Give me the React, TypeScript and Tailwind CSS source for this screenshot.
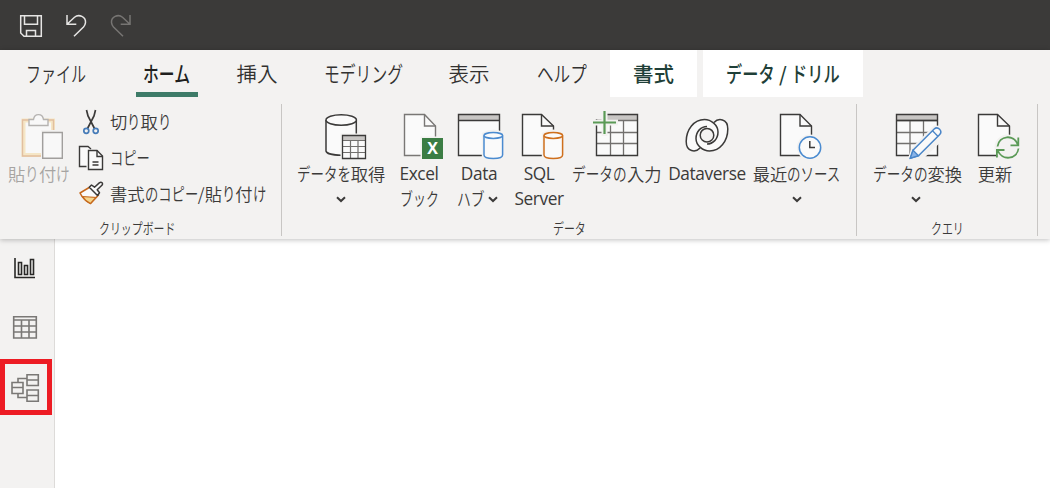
import type { ReactNode } from "react";

const DARK = "#3b3a39";
const PAPER = "#fafafa";

/* Japanese UI text with condensed kana and full-width kanji. */
function Jp({ text, size, kana = 0.77, className = "" }: { text: string; size: number; kana?: number; className?: string }) {
  const runs = text.match(/[\u3040-\u30ff]+|[^\u3040-\u30ff]+/g) ?? [];
  return (
    <span className={`inline-flex whitespace-nowrap ${className}`} style={{ fontSize: size }}>
      {runs.map((run, i) => {
        if (!/[\u3040-\u30ff]/.test(run)) {
          return <span key={i} className="whitespace-pre">{run}</span>;
        }
        return (
          <span key={i} className="inline-block" style={{ width: run.length * kana * size }}>
            <span className="inline-block origin-left" style={{ transform: `scale(${kana}, 1.06)` }}>
              {run}
            </span>
          </span>
        );
      })}
    </span>
  );
}

function Latin({ children, className = "" }: { children: string; className?: string }) {
  return <span className={`font-['Open_Sans','Noto_Sans',sans-serif] text-[17.3px] font-normal tracking-[-0.4px] ${className}`}>{children}</span>;
}

function Chevron() {
  return (
    <svg width="10" height="7" viewBox="0 0 10 7" fill="none" stroke={DARK} strokeWidth="2">
      <path d="M1 1.2 5 5 9 1.2" />
    </svg>
  );
}

function Icon({ box, children }: { box: string; children: ReactNode }) {
  const [, , w, h] = box.split(" ");
  return (
    <svg width={w} height={h} viewBox={box} fill="none" className="shrink-0">
      {children}
    </svg>
  );
}

function Cylinder({ x, color }: { x: number; color: string }) {
  return (
    <g transform={`translate(${x} 0)`}>
      <path d="M-2 160V133Q9.500 126 21 133V160Z" fill="#f3f2f1" />
      <path d="M.2 135.500V155C.2 159.600 18.800 159.600 18.800 155V135.500" fill={PAPER} stroke={color} strokeWidth="1.500" />
      <ellipse cx="9.500" cy="135.500" rx="9.300" ry="2.900" fill={PAPER} stroke={color} strokeWidth="1.500" />
    </g>
  );
}

function Doc({ x, fold, stroke = DARK }: { x: number; fold: number; stroke?: string }) {
  return (
    <g stroke={stroke} strokeWidth="1.400">
      <path d={`M${x} 114.500H${fold}L${x + 31} 126V155.500H${x}Z`} fill={PAPER} />
      <path d={`M${fold} 114.500V126H${x + 31}`} />
    </g>
  );
}

function Tab({ children, className }: { children: ReactNode; className: string }) {
  return <button className={`flex h-[47px] shrink-0 items-center justify-center ${className}`}>{children}</button>;
}

function Big({ icon, label, second, className }: { icon: ReactNode; label: ReactNode; second?: ReactNode; className: string }) {
  return (
    <button className={`flex h-[115px] shrink-0 flex-col items-center pt-[7px] ${className}`}>
      {icon}
      <span className="flex h-6 items-center justify-center whitespace-nowrap">{label}</span>
      <span className="flex h-[26px] items-center justify-center gap-[3px] whitespace-nowrap">{second}</span>
    </button>
  );
}

function Group({ label, className, labelClass = "", children }: { label: string; className: string; labelClass?: string; children: ReactNode }) {
  return (
    <section className={`my-[7px] flex h-[132px] shrink-0 flex-col border-r border-[#c8c6c4] ${className}`}>
      <div className="flex h-[115px]">{children}</div>
      <div className={`flex h-[17px] items-center justify-center leading-none ${labelClass}`}>
        <Jp text={label} size={14} kana={0.78} />
      </div>
    </section>
  );
}

function Small({ icon, text }: { icon: ReactNode; text: string }) {
  return (
    <button className="flex h-9 items-center gap-[4px]">
      {icon}
      <Jp text={text} size={17.3} />
    </button>
  );
}

export default function App() {
  return (
    <div className="flex h-[488px] w-[1050px] flex-col overflow-hidden bg-white font-['Noto_Sans_CJK_JP',sans-serif] font-[350] text-[#3b3a39]">
      <header className="h-[50px] shrink-0 bg-[#3b3a39]">
        <Icon box="0 0 140 50">
          <g stroke="#e6e5e4" strokeWidth="1.500">
            <path d="M20.700 15.700H41.300V36.200H24L20.700 33Z M24.500 15.700V24.300H37.500V15.700 M26.500 36V30.500H35.500V36" />
            <path d="M67 15V24.300H76.300M67.300 24 74.500 17.300C79 13.500 86 17 85.500 22.700C85.300 24.500 84.600 25.800 83.500 27L74 36.300" />
          </g>
          <path d="M130 15V24.300H120.700M129.700 24 122.500 17.300C118 13.500 111 17 111.500 22.700C111.700 24.500 112.400 25.800 113.500 27L123 36.300" stroke="#777573" strokeWidth="1.500" />
        </Icon>
      </header>

      <div className="z-10 h-[189px] shrink-0 bg-[#f3f2f1] shadow-[0_1px_5px_rgba(0,0,0,0.25)]">
        <nav className="flex h-[47px] text-[#323130]">
          <Tab className="ml-[26px] w-[60px]"><Jp text="ファイル" size={20} kana={0.75} /></Tab>
          <Tab className="ml-[50px] w-[62px] border-b-[5px] border-[#3d7b68] pt-[5px] font-medium text-[#201f1e]"><Jp text="ホーム" size={20} kana={0.79} /></Tab>
          <Tab className="ml-[38px] w-[42px]"><Jp text="挿入" size={20.500} /></Tab>
          <Tab className="ml-[45px] w-[80px]"><Jp text="モデリング" size={20} kana={0.79} /></Tab>
          <Tab className="ml-[45px] w-[42px]"><Jp text="表示" size={20.500} /></Tab>
          <Tab className="ml-[46px] w-[52px]"><Jp text="ヘルプ" size={20} kana={0.83} /></Tab>
          <Tab className="ml-[22px] w-[87px] bg-white font-medium text-[#1f3f38]"><Jp text="書式" size={20.500} /></Tab>
          <Tab className="ml-[6px] w-[160px] bg-white font-medium text-[#1f3f38]"><Jp text="データ / ドリル" size={20} kana={0.81} /></Tab>
        </nav>

        <div className="flex h-[142px]">
          <Group label="クリップボード" className="w-[282px]" labelClass="pr-[6px]">
            <Big
              className="w-[78px] text-[#a6a4a2]"
              icon={
                <Icon box="0 111 78 51">
                  <path d="M23.500 120.500H53V155H23.500Z" fill="#f8f8f8" stroke="#f5e6c6" strokeWidth="4" />
                  <path d="M22.500 120H53.500V156H22.500Z" stroke="#e2bf9f" strokeWidth="1.400" />
                  <path d="M29 125.500V119.500H33.500C34.500 113 42.500 113 43.500 119.500H48V125.500Z" fill="#f8f8f8" stroke="#b5b3b1" strokeWidth="1.400" />
                  <path d="M41 130H65V161H41Z" fill="#f3f2f1" />
                  <path d="M42.700 132.500H62.300V158.300H42.700Z" fill="#f8f8f8" stroke="#a19f9d" strokeWidth="1.400" />
                </Icon>
              }
              label={<Jp text="貼り付け" size={17.3} kana={0.79} />}
            />
            <div className="flex flex-col">
              <Small
                text="切り取り"
                icon={
                  <Icon box="78 108 28 28">
                    <path d="M86.500 110 88 116 94.500 128.500M95.500 110 94 116 87.500 128.500" stroke={DARK} strokeWidth="1.700" />
                    <circle cx="86.300" cy="130.800" r="2.500" stroke="#477cb8" strokeWidth="1.700" />
                    <circle cx="95.700" cy="130.800" r="2.500" stroke="#477cb8" strokeWidth="1.700" />
                  </Icon>
                }
              />
              <Small
                text="コピー"
                icon={
                  <Icon box="78 144 28 28">
                    <g stroke={DARK} strokeWidth="1.400">
                      <path d="M86.500 166.500H79.500V146.500H88L91 149" fill={PAPER} />
                      <path d="M88.500 150.500H97L102.500 156V169.500H88.500Z" fill={PAPER} />
                      <path d="M97 150.500V156.500H102.500M92.500 162H98.500M92.500 165H98.500" />
                    </g>
                  </Icon>
                }
              />
              <Small
                text="書式のコピー/貼り付け"
                icon={
                  <Icon box="78 180 28 28">
                    <path d="M80 193 90 187 98.500 195 90.500 203.500C85 201 82 197 80 193Z" fill={PAPER} stroke="#c6681c" strokeWidth="1.500" strokeLinejoin="round" />
                    <path d="M82.500 196.500 96 197.500 90.500 203.500C87 202 84.500 199.500 82.500 196.500Z" fill="#f4d58c" stroke="#c6681c" strokeWidth="1.200" />
                    <path d="M91.500 185 94.500 187.200 99.300 182.900C101.500 181.200 103.600 183.500 101.900 185.200L97.200 189.800 99.500 192.800 97.500 195.500 89.300 187.300Z" fill={PAPER} stroke={DARK} strokeWidth="1.500" strokeLinejoin="round" />
                  </Icon>
                }
              />
            </div>
          </Group>

          <Group label="データ" className="w-[575px]">
            <Big
              className="ml-[10px] w-[98px]"
              icon={
                <Icon box="292 111 98 51">
                  <path d="M326 120V151C327 156.500 355 156.500 356.300 151V120" fill={PAPER} stroke={DARK} strokeWidth="1.500" />
                  <ellipse cx="341.200" cy="120" rx="15.200" ry="5.200" fill={PAPER} stroke={DARK} strokeWidth="1.500" />
                  <path d="M340.500 133.500H369V161H340.500Z" fill="#f3f2f1" />
                  <path d="M342.500 135.500H365.500V158.500H342.500Z" fill={PAPER} />
                  <path d="M343 136H365V140.500H343Z" fill="#c8c6c4" />
                  <path d="M342.500 140.500H365.500M350.500 140.500V158.500M358 140.500V158.500M342.500 146.500H365.500M342.500 152.500H365.500" stroke="#72706e" strokeWidth="1.200" />
                  <path d="M342.500 135.500H365.500V158.500H342.500Z" stroke={DARK} strokeWidth="1.300" />
                </Icon>
              }
              label={<Jp text="データを取得" size={17.3} kana={0.78} />}
              second={<Chevron />}
            />
            <Big
              className="w-[58px]"
              icon={
                <Icon box="390 111 58 51">
                  <Doc x={404.500} fold={424.500} stroke="#797775" />
                  <path d="M420.500 136.500H445V161H420.500Z" fill="#f3f2f1" />
                  <path d="M422 138H443V159H422Z" fill="#3b7d44" />
                  <text x="432.500" y="154" textAnchor="middle" fill="#fff" className="font-['Open_Sans',sans-serif] text-[16px] font-bold">X</text>
                </Icon>
              }
              label={<Latin>Excel</Latin>}
              second={<Jp text="ブック" size={17.3} kana={0.75} />}
            />
            <Big
              className="w-[62px]"
              icon={
                <Icon box="448 111 62 51">
                  <path d="M458.500 114.500H499.500V155.500H458.500Z" fill={PAPER} />
                  <path d="M458.500 114.500H499.500V120.500H458.500Z" fill="#c8c6c4" />
                  <path d="M458.500 114.500H499.500V155.500H458.500ZM458.500 120.500H499.500" stroke={DARK} strokeWidth="1.400" />
                  <Cylinder x={483.800} color="#4a8bd0" />
                </Icon>
              }
              label={<Latin>Data</Latin>}
              second={<span className="flex items-center gap-[4px] pr-[3px]"><Jp text="ハブ" size={17.3} kana={0.8} /><Chevron /></span>}
            />
            <Big
              className="w-[58px]"
              icon={
                <Icon box="510 111 58 51">
                  <Doc x={522.500} fold={541.500} />
                  <Cylinder x={543.800} color="#cf6f1c" />
                </Icon>
              }
              label={<Latin>SQL</Latin>}
              second={<Latin>Server</Latin>}
            />
            <Big
              className="ml-[3px] w-[92px]"
              icon={
                <Icon box="571 111 92 51">
                  <path d="M596.500 114.500H637.500V155.500H596.500Z" fill={PAPER} />
                  <path d="M596.500 114.500H637.500V120.500H596.500Z" fill="#c8c6c4" />
                  <path d="M596.500 120.500H637.500M610.500 120.500V155.500M623.500 120.500V155.500M596.500 132.500H637.500M596.500 143.500H637.500" stroke="#72706e" strokeWidth="1.300" />
                  <path d="M596.500 114.500H637.500V155.500H596.500Z" stroke={DARK} strokeWidth="1.400" />
                  <path d="M593 122.500H618M604.500 111V136M594 116H606" stroke="#f3f2f1" strokeWidth="6" />
                  <path d="M593 122.500H616M604.500 111V134" stroke="#5b9a57" strokeWidth="2.200" />
                </Icon>
              }
              label={<Jp text="データの入力" size={17.3} kana={0.79} />}
            />
            <Big
              className="ml-[2px] w-[84px]"
              icon={
                <Icon box="665 111 84 51">
                  <g stroke={DARK} strokeWidth="1.500">
                    <path d="M714 122.500C718 118 727.800 118 727.800 129C727.800 141 720 151 709.500 151C703 151 696 145.500 696 138.500V130L707 121Z" fill={PAPER} stroke="none" />
                    <path d="M700 148C696 152.500 686.200 152.500 686.200 141.500C686.200 129.500 694 119.500 704.500 119.500C711 119.500 718 125 718 132V140L707 145Z" fill={PAPER} stroke="none" />
                    <path d="M714 122.500C718 118 727.800 118 727.800 129C727.800 141 720 151 709.500 151C703 151 696 145.500 696 138.500C696 131.500 701 126.500 707 126.500" />
                    <path d="M700 148C696 152.500 686.200 152.500 686.200 141.500C686.200 129.500 694 119.500 704.500 119.500C711 119.500 718 125 718 132C718 139 713 144 707 144" />
                    <circle cx="707" cy="135.200" r="6.800" fill="#f3f2f1" />
                  </g>
                </Icon>
              }
              label={<Latin>Dataverse</Latin>}
            />
            <Big
              className="ml-[2px] w-[92px]"
              icon={
                <Icon box="751 111 92 51">
                  <Doc x={780.500} fold={800} />
                  <circle cx="810" cy="147.500" r="13" fill="#f3f2f1" />
                  <circle cx="810" cy="147.500" r="10.700" fill={PAPER} stroke="#4a8bd0" strokeWidth="1.500" />
                  <path d="M809.800 141V147.500H815" stroke={DARK} strokeWidth="1.500" />
                </Icon>
              }
              label={<Jp text="最近のソース" size={17.3} kana={0.78} />}
              second={<Chevron />}
            />
          </Group>

          <Group label="クエリ" className="w-[181px]">
            <Big
              className="ml-[12px] w-[94px]"
              icon={
                <Icon box="869 111 94 51">
                  <path d="M896.500 114.500H937.500V155.500H896.500Z" fill={PAPER} />
                  <path d="M896.500 114.500H937.500V120.500H896.500Z" fill="#c8c6c4" />
                  <path d="M896.500 120.500H937.500M910 120.500V155.500M923.500 120.500V155.500M896.500 132.500H937.500M896.500 143.500H937.500" stroke="#72706e" strokeWidth="1.300" />
                  <path d="M896.500 114.500H937.500V155.500H896.500ZM896.500 120.500H937.500" stroke={DARK} strokeWidth="1.400" />
                  <path d="M907 161 911.500 148 934 125.500 946 126V137L921 161Z" fill="#f3f2f1" />
                  <path d="M910.300 158.200 913 150.200 934.200 129C937.800 125.800 943.200 131 939.500 134.800L918.500 155.700Z" fill={PAPER} stroke="#4a86c8" strokeWidth="1.500" strokeLinejoin="round" />
                  <path d="M910.300 158.200 913 150.200 918.500 155.700Z" fill="#8ab4e8" stroke="#4a86c8" strokeWidth="1.300" />
                  <path d="M932.500 130.700 937.900 136.200" stroke="#4a86c8" strokeWidth="1.300" />
                </Icon>
              }
              label={<Jp text="データの変換" size={17.3} kana={0.79} className="ml-[3px]" />}
              second={<Chevron />}
            />
            <Big
              className="ml-[6px] w-[52px]"
              icon={
                <Icon box="969 111 52 51">
                  <Doc x={978.500} fold={997.500} />
                  <circle cx="1007.500" cy="147.500" r="13" fill="#f3f2f1" />
                  <g stroke="#5b9a57" strokeWidth="1.800">
                    <path d="M997.500 146.500C999 135.500 1014 133.500 1018 145M1018.300 137.500V145.300H1010.500" />
                    <path d="M1018.500 148.500C1017 159.500 1002 161.500 997.500 150M996.900 157.500V150H1004.500" />
                  </g>
                </Icon>
              }
              label={<Jp text="更新" size={17.3} />}
            />
          </Group>
        </div>
      </div>

      <main className="flex min-h-0 flex-1">
        <aside className="flex w-[55px] flex-col border-r border-[#dddbd9] bg-[#f3f2f1]">
          <button className="h-[60px]">
            <Icon box="0 239 54 60">
              <path d="M15 258V277.500H35M18.500 262.500H21.500V274.500H18.500ZM24.500 265.500H27.500V274.500H24.500ZM30.500 259.500H33.500V274.500H30.500Z" stroke="#292827" strokeWidth="1.600" />
            </Icon>
          </button>
          <button className="h-[60px]">
            <Icon box="0 299 54 60">
              <path d="M13.700 316.700H36.300V338H13.700ZM13.700 320H36.300M13.700 326H36.300M13.700 332H36.300M21.500 320V338M29 320V338" stroke="#7a7876" strokeWidth="1.600" />
            </Icon>
          </button>
          <button className="h-[56px] w-[52px] border-[5px] border-[#ed1c24]">
            <Icon box="5 364 42 46">
              <path d="M12 382.500H23V393.500H12ZM12 387.500H23M27 374.700H38.300V385.500H27ZM27 380H38.300M27 390H38.300V401.300H27ZM27 395.500H38.300M18 382.500V378.500H27M18 393.500V397.500H27" stroke="#7a7876" strokeWidth="1.600" />
            </Icon>
          </button>
        </aside>
        <div className="flex-1 bg-white" />
      </main>
    </div>
  );
}
